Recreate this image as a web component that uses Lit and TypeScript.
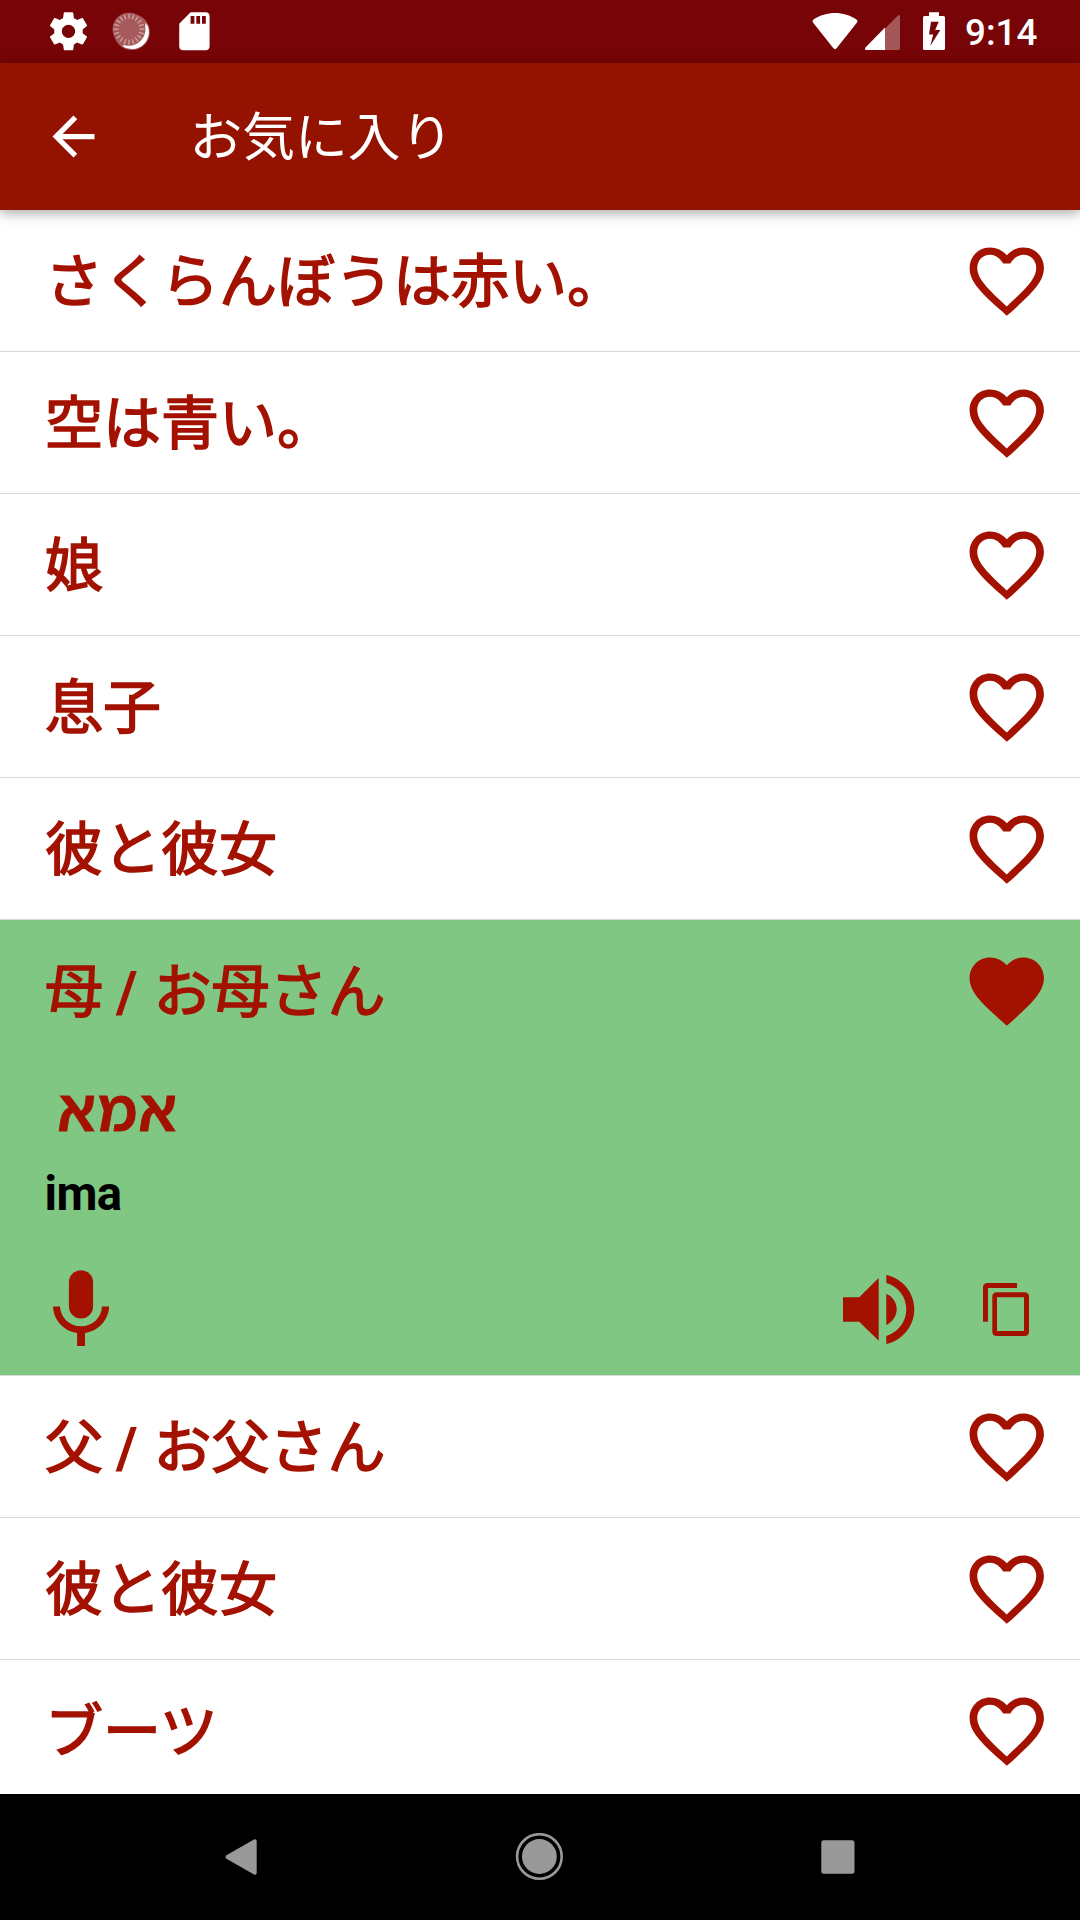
import { LitElement, html, css, svg, nothing } from "lit";
import { customElement, property } from "lit/decorators.js";
import { classMap } from "lit/directives/class-map.js";

interface Phrase {
  text: string;
  favorite?: boolean;
  translation?: string;
  romanized?: string;
}

const PHRASES: Phrase[] = [
  { text: "さくらんぼうは赤い。" },
  { text: "空は青い。" },
  { text: "娘" },
  { text: "息子" },
  { text: "彼と彼女" },
  { text: "母 / お母さん", favorite: true, translation: "אמא", romanized: "ima" },
  { text: "父 / お父さん" },
  { text: "彼と彼女" },
  { text: "ブーツ" },
];

const HEART =
  "M256 446l-30.164-27.211C118.718 322.442 48 258.61 48 179.095 48 114.221 97.918 64 162.4 64c36.399 0 70.717 16.742 93.6 43.947C278.882 80.742 313.199 64 349.6 64 414.082 64 464 114.221 464 179.095c0 79.516-70.719 143.348-177.836 241.694z";
const HEART_INNER =
  "M236 154C217 123 190 105 162.400 105C121 105 91 137 91 179C91 240 152 298 256 394C360 298 421 240 421 179C421 137 391 105 349.600 105C322 105 295 123 276 154Z";

@customElement("status-bar")
export class StatusBar extends LitElement {
  static styles = css`
    :host {
      display: flex;
      height: 65px;
      background: #770507;
      color: #fff;
      font: 500 36.75px/65px Roboto, sans-serif;
      justify-content: space-between;
    }
    svg { display: block; fill: currentColor; flex: none; }
    .time { margin-left: -60px; width: 115px; white-space: nowrap; }
    .side { display: flex; }
  `;

  render() {
    const ticks = Array.from({ length: 20 }, (_, i) => i * 18);
    return html`
      <div class="side">
        <svg width="230" height="63" viewBox="0 0 230 63">
          <path transform="translate(45.700 8.500) scale(1.900)"
            d="M19.430 12.980c.04-.32.07-.64.07-.98s-.03-.66-.07-.98l2.110-1.650c.19-.15.24-.42.12-.64l-2-3.460c-.12-.22-.39-.3-.61-.22l-2.490 1c-.52-.4-1.080-.73-1.690-.98l-.38-2.650C14.460 2.180 14.250 2 14 2h-4c-.25 0-.46.18-.49.42l-.38 2.650c-.61.25-1.170.59-1.690.98l-2.490-1c-.23-.09-.49 0-.61.22l-2 3.460c-.13.22-.07.49.12.64l2.110 1.650c-.04.32-.07.65-.07.98s.03.66.07.98l-2.110 1.650c-.19.15-.24.42-.12.64l2 3.460c.12.22.39.3.61.22l2.490-1c.52.4 1.080.73 1.690.98l.38 2.650c.03.24.24.42.49.42h4c.25 0 .46-.18.49-.42l.38-2.650c.61-.25 1.170-.59 1.690-.98l2.490 1c.23.09.49 0 .61-.22l2-3.460c.12-.22.07-.49-.12-.64l-2.110-1.650zM12 15.500c-1.930 0-3.500-1.570-3.500-3.500s1.570-3.500 3.500-3.500 3.500 1.570 3.500 3.500-1.570 3.500-3.500 3.500z" />
          <circle cx="131.800" cy="32" r="18" opacity=".35" />
          <path d="M145.500 22.500A17 17 0 0 1 123.500 46.500C132 48.500 145 41 145.500 22.500Z" />
          <path d="M147.300 25A17 17 0 0 1 122.500 46.300Z" />
          <circle cx="129" cy="29.200" r="16.500" fill="#a75a5b" />
          ${ticks.map((a) => svg`<path d="M129 13.700V18.700" stroke="#cfa5a5" stroke-width="1.300"
            transform=${`rotate(${a} 129 29.200)`} />`)}
          <path transform="translate(171.600 8.500) scale(1.900)"
            d="M18 2h-8L4.020 8 4 20c0 1.100.9 2 2 2h12c1.100 0 2-.9 2-2V4c0-1.100-.9-2-2-2zm-6 6h-2V4h2v4zm3 0h-2V4h2v4zm3 0h-2V4h2v4z" />
        </svg>
      </div>
      <div class="side">
        <svg width="215" height="63" viewBox="810 0 215 63">
          <path d="M813 22.500Q811.700 20.800 813.500 19.600C826 10.800 844 10.800 856.500 19.600Q858.300 20.800 857 22.500L836.800 48Q835 50.300 833.200 48Z" />
          <path d="M898 15.600Q900 13.800 900 16.500V48Q900 50 898 50H885V28.500Z" opacity=".33" />
          <path d="M885 27.600V50H866.500Q864 50 865.500 47.500Z" />
          <path fill-rule="evenodd"
            d="M929 12.300h10v3.700h4.500q1.500 0 1.500 1.500v31q0 1.500-1.500 1.500h-19q-1.500 0-1.500-1.500v-31q0-1.500 1.500-1.500H929zM931 21.800L929 34.500h4.200L930.300 46L940.300 30H935.200L938.700 21.800Z" />
        </svg>
        <span class="time">9:14</span>
      </div>
    `;
  }
}

@customElement("title-bar")
export class TitleBar extends LitElement {
  @property() heading = "";

  static styles = css`
    :host {
      display: flex;
      align-items: center;
      height: 147px;
      margin-top: -2px;
      padding-left: 42px;
      gap: 84.500px;
      box-sizing: border-box;
      background: #931300;
      color: #fff;
      box-shadow: 0 3px 12px rgba(0, 0, 0, 0.35);
      position: relative;
    }
    svg { fill: currentColor; }
    .heading {
      font: 400 52.75px/76px Roboto, "Noto Sans CJK JP", sans-serif;
      padding-top: 2px;
    }
  `;

  render() {
    return html`
      <svg width="63" height="63" viewBox="0 0 24 24">
        <path d="M20 11H7.830l5.590-5.590L12 4l-8 8 8 8 1.410-1.410L7.830 13H20v-2z" />
      </svg>
      <span class="heading">${this.heading}</span>
    `;
  }
}

@customElement("phrase-row")
export class PhraseRow extends LitElement {
  @property({ attribute: false }) phrase!: Phrase;

  static styles = css`
    :host { display: block; flex: none; }
    .row {
      box-sizing: border-box;
      border-bottom: 1px solid #d8d8d8;
      color: #a31200;
      font-family: Roboto, "Noto Sans CJK JP", sans-serif;
    }
    .open { background: #81c784; height: 456px; }
    .head {
      display: flex;
      align-items: center;
      justify-content: space-between;
      height: 141px;
      padding: 0 28px 0 45px;
    }
    .text {
      font-size: 58px;
      line-height: 84px;
      font-weight: 400;
      padding-top: 2px;
      white-space: pre;
      -webkit-text-stroke: 1.600px currentColor;
    }
    .latin { font-weight: 700; -webkit-text-stroke: 0; margin: 0 1.500px 0 -1.500px; }
    svg { display: block; fill: currentColor; }
    .heart { margin-top: 2px; }
    .details { padding-left: 44.500px; }
    .translation {
      font: 600 57.750px/80px "Noto Sans Hebrew", "Open Sans", sans-serif;
      -webkit-text-stroke: 0.900px currentColor;
      letter-spacing: 1.500px;
      padding: 8px 0 2px 13px;
    }
    .romanized {
      font-size: 47.250px;
      line-height: 56px;
      font-weight: 700;
      letter-spacing: -0.600px;
      color: #000;
      padding-top: 15px;
    }
    .actions {
      display: flex;
      align-items: center;
      justify-content: space-between;
      padding: 0 51px 0 53px;
      margin-top: 47px;
      height: 78px;
    }
    .group { display: flex; align-items: center; gap: 68px; padding-top: 3px; }
  `;

  private renderText(text: string) {
    const [first, second] = text.split(" / ");
    return second ? html`${first}<span class="latin"> / </span>${second}` : first;
  }

  render() {
    const { text, favorite, translation, romanized } = this.phrase;
    return html`
      <div class=${classMap({ row: true, open: !!translation })}>
        <div class="head">
          <span class="text">${this.renderText(text)}</span>
          <svg class="heart" width="91.500" height="91.500" viewBox="0 0 512 512">
            <path fill-rule="evenodd" d=${favorite ? HEART : HEART + HEART_INNER} />
          </svg>
        </div>
        ${translation
          ? html`
              <div class="details">
                <div class="translation">${translation}</div>
                <div class="romanized">${romanized}</div>
              </div>
              <div class="actions">
                <svg width="57" height="76" viewBox="53 1269 57 76">
                  <rect x="68.900" y="1269.300" width="24.200" height="48.200" rx="12.100" />
                  <path d="M53 1305.500H60C60.800 1317 69.500 1325.300 81 1325.300S101.300 1317 102 1305.500H109.200C108.500 1319 98.500 1330 85 1332V1345H77.100V1332C63.500 1330 53.500 1319 53 1305.500Z" />
                </svg>
                <div class="group">
                  <svg width="72" height="70" viewBox="0 0 72 70">
                    <path d="M0 22.200H16.200L35.700 3V65.800L16.200 46.700H0ZM43.300 18.800C49.500 21.500 53.700 27.500 53.700 34.300S49.500 47 43.300 50ZM43.300 0C59.500 3.700 71.300 17.500 71.300 34.300S59.500 65.500 43.300 69V61C55 57.500 63.300 47 63.300 34.300S55 11.500 43.300 8Z" />
                  </svg>
                  <svg width="46" height="53" viewBox="0 0 46 53">
                    <path fill-rule="evenodd"
                      d="M4.500 0H34V5H5V38.700H0V4.500Q0 0 4.500 0ZM13.800 9.300H41.500Q46 9.300 46 13.800V48.500Q46 53 41.500 53H13.800Q9.300 53 9.300 48.500V13.800Q9.300 9.300 13.800 9.300ZM14 14.300V48H41V14.300Z" />
                  </svg>
                </div>
              </div>
            `
          : nothing}
      </div>
    `;
  }
}

@customElement("nav-bar")
export class NavBar extends LitElement {
  static styles = css`
    :host {
      display: flex;
      align-items: center;
      justify-content: space-between;
      height: 126px;
      box-sizing: border-box;
      padding: 0 225px 0 225px;
      background: #000;
    }
    svg { display: block; fill: #999; }
  `;

  render() {
    return html`
      <svg width="32" height="36" viewBox="0 0 32 36">
        <path d="M1 16.600L29 .6Q31.700-.5 31.700 2.500V33.500Q31.700 36.500 29 35.400L1 19.400Q0 18 1 16.600Z" />
      </svg>
      <svg width="48" height="48" viewBox="0 0 48 48">
        <circle cx="24.400" cy="23.500" r="22.300" fill="none" stroke="#999" stroke-width="2.600" />
        <circle cx="24.400" cy="23.500" r="17.400" />
      </svg>
      <svg width="34" height="34" viewBox="0 0 34 34">
        <rect x="0.300" y="0.300" width="33.200" height="33.400" rx="2.500" />
      </svg>
    `;
  }
}

@customElement("app-root")
export class AppRoot extends LitElement {
  static styles = css`
    :host {
      display: flex;
      flex-direction: column;
      width: 1080px;
      height: 1920px;
      overflow: hidden;
      background: #fff;
    }
    .bar { flex: none; }
    .list {
      flex: 1;
      min-height: 0;
      overflow: hidden;
      display: flex;
      flex-direction: column;
    }
  `;

  render() {
    return html`
      <status-bar class="bar"></status-bar>
      <title-bar class="bar" heading="お気に入り"></title-bar>
      <div class="list">
        ${PHRASES.map((p) => html`<phrase-row .phrase=${p}></phrase-row>`)}
      </div>
      <nav-bar class="bar"></nav-bar>
    `;
  }
}
